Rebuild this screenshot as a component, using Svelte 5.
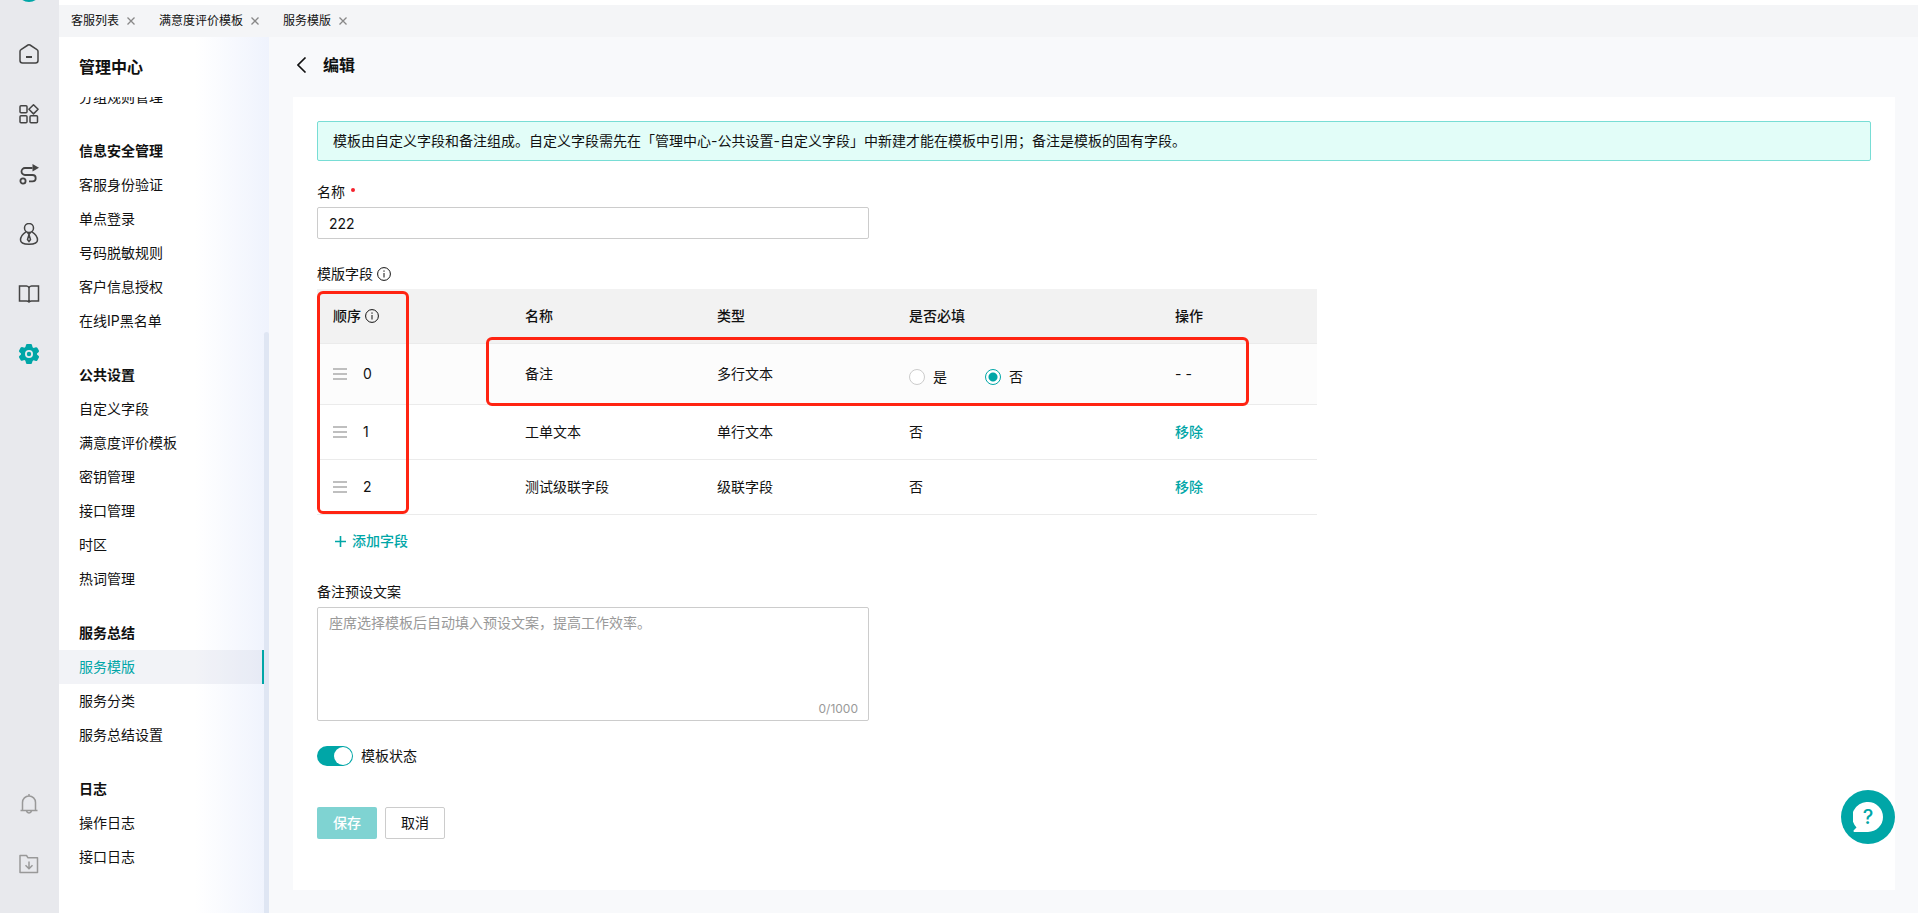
<script>
  let name = '222';
  let preset = '';
  let remarkRequired = 'no';
  let enabled = true;

  const tabs = ['客服列表', '满意度评价模板', '服务模版'];

  const active = '服务模版';

  const groups = [
    { title: '', items: ['分组规则管理'] },
    {
      title: '信息安全管理',
      items: ['客服身份验证', '单点登录', '号码脱敏规则', '客户信息授权', '在线IP黑名单'],
    },
    {
      title: '公共设置',
      items: ['自定义字段', '满意度评价模板', '密钥管理', '接口管理', '时区', '热词管理'],
    },
    { title: '服务总结', items: ['服务模版', '服务分类', '服务总结设置'] },
    { title: '日志', items: ['操作日志', '接口日志'] },
  ];

  let fields = [
    { name: '备注', type: '多行文本', fixed: true },
    { name: '工单文本', type: '单行文本', required: '否' },
    { name: '测试级联字段', type: '级联字段', required: '否' },
  ];

  const removeField = (index) => {
    fields = fields.filter((_, i) => i !== index);
  };
</script>

{#snippet info()}
  <svg width="14" height="14" viewBox="0 0 14 14">
    <circle cx="7" cy="7" r="6.4" />
    <path d="M7 6v4.5M7 3.4v1.4" />
  </svg>
{/snippet}

<div class="app">
  <nav class="rail" aria-label="主导航">
    <span class="logo"></span>
    <button aria-label="首页">
      <svg width="22" height="22" viewBox="0 0 22 22">
        <path d="M2 8.4Q2 7.2 3 6.6L10 2Q11 1.4 12 2L19 6.6Q20 7.2 20 8.4V17.5Q20 20 17.5 20H4.5Q2 20 2 17.5Z" />
        <path stroke-width="2" d="M8 14h6" />
      </svg>
    </button>
    <button aria-label="应用">
      <svg width="22" height="22" viewBox="0 0 22 22">
        <rect x="2" y="2.8" width="7" height="7" rx="1" />
        <rect x="2" y="12.8" width="7" height="7" rx="1" />
        <rect x="12" y="12.8" width="7.5" height="7" rx="1" />
        <path d="M15.5 1.7l4.6 4.6-4.6 4.6-4.6-4.6z" stroke-linejoin="round" />
      </svg>
    </button>
    <button aria-label="流程">
      <svg width="22" height="22" viewBox="0 0 22 22">
        <g stroke-width="1.8">
          <circle cx="5" cy="18" r="2.6" />
          <path d="M14.5 5H7a3.5 3.5 0 0 0 0 7h7.500a3.200 3.200 0 0 1 0 6.400H11" />
        </g>
        <path class="solid" d="M14.5 1l6.500 3.800-6.500 3.800z" />
      </svg>
    </button>
    <button aria-label="客户">
      <svg width="22" height="22" viewBox="0 0 22 22">
        <circle cx="11" cy="5" r="4.5" />
        <path d="M8 8.8C4.5 11 2.5 13.5 2.5 17c0 2.600 3 4.200 8.500 4.200s8.500-1.600 8.500-4.200c0-3.500-2-6-5.500-8.200" />
        <path d="M9.6 9.5l1.400 2 1.400-2M11 11.500l-1.500 5 1.500 2 1.500-2z" />
      </svg>
    </button>
    <button aria-label="知识库">
      <svg width="22" height="22" viewBox="0 0 22 22">
        <path d="M11 5Q10.500 3 8.500 3H1.500V18H8.500Q10 18 11 19Q12 18 13.500 18H20.500V3H13.500Q11.500 3 11 5V19" />
      </svg>
    </button>
    <button class="current" aria-label="设置">
      <svg width="22" height="22" viewBox="0 0 22 22">
        <path
          class="solid"
          fill-rule="evenodd"
          d="M8 2Q8.200 1 9 1h4q.8 0 1 1l.6 2.300 1 .6 2.300-.7q.9-.200 1.400.6l1.600 2.800q.4.900-.2 1.500L19 10.500v1l1.700 1.600q.6.600.2 1.500l-1.600 2.800q-.5.800-1.400.6l-2.300-.7-1 .6L14 20q-.2 1-1 1H9q-.8 0-1-1l-.6-2.300-1-.6-2.300.7q-.9.200-1.400-.6L1.100 14.600q-.4-.9.200-1.500L3 11.500v-1L1.300 8.900q-.6-.6-.2-1.500l1.600-2.800q.5-.8 1.400-.6l2.300.7 1-.6zM11 7a4 4 0 1 0 0 8a4 4 0 0 0 0-8z"
        />
        <circle class="solid" cx="11" cy="11" r="2.2" />
      </svg>
    </button>
    <span class="spacer"></span>
    <button class="muted" aria-label="通知">
      <svg width="22" height="22" viewBox="0 0 22 22">
        <path d="M2.500 17.500h17M4.500 17.500V9.500a6.500 6.500 0 0 1 13 0v8M11 1v2M8.500 18a2.600 2.600 0 0 0 5 0" />
      </svg>
    </button>
    <button class="muted" aria-label="下载">
      <svg width="22" height="22" viewBox="0 0 22 22">
        <path d="M2 2.500h6.500l1.500 2.300h9.500V19.500H2z" stroke-linejoin="round" />
        <path d="M11 8.500v7M7.500 12.300l3.500 3.500 3.500-3.500" />
      </svg>
    </button>
  </nav>

  <div class="main">
    <div class="tabs">
      {#each tabs as tab}
        <div class="tab">
          <a href="#tab">{tab}</a>
          <button aria-label="关闭{tab}">
            <svg width="8" height="8" viewBox="0 0 8 8"><path d="M.5.5l7 7M7.5.5l-7 7" /></svg>
          </button>
        </div>
      {/each}
    </div>

    <div class="body">
      <aside class="sidebar">
        <h2>管理中心</h2>
        <div class="menu">
          <div class="menu-list">
            {#each groups as group}
              <section>
                {#if group.title}<h3>{group.title}</h3>{/if}
                {#each group.items as item}
                  <a href="#menu" class:active={item === active}>{item}</a>
                {/each}
              </section>
            {/each}
          </div>
          <span class="scrollbar"></span>
        </div>
      </aside>

      <main>
        <header>
          <button aria-label="返回">
            <svg width="10" height="16" viewBox="0 0 10 16"><path d="M8.500.5L1 8l7.500 7.500" /></svg>
          </button>
          <h1>编辑</h1>
        </header>

        <form class="card" on:submit|preventDefault>
          <p class="notice">
            模板由自定义字段和备注组成。自定义字段需先在「管理中心-公共设置-自定义字段」中新建才能在模板中引用；备注是模板的固有字段。
          </p>

          <label class="label" for="name">名称 <span class="dot"></span></label>
          <input id="name" class="text" type="text" bind:value={name} />

          <div class="label section">模版字段 {@render info()}</div>
          <div class="table-wrap">
            <table>
              <thead>
                <tr>
                  <th><span class="cell">顺序 {@render info()}</span></th>
                  <th>名称</th>
                  <th>类型</th>
                  <th>是否必填</th>
                  <th>操作</th>
                </tr>
              </thead>
              <tbody>
                {#each fields as field, i}
                  <tr class:fixed={field.fixed}>
                    <td>
                      <span class="cell order">
                        <svg width="14" height="12" viewBox="0 0 14 12">
                          <path d="M0 1h14M0 6h14M0 11h14" />
                        </svg>
                        {i}
                      </span>
                    </td>
                    <td>{field.name}</td>
                    <td>{field.type}</td>
                    <td>
                      {#if field.fixed}
                        <div class="radios">
                          <label><input type="radio" value="yes" bind:group={remarkRequired} />是</label>
                          <label><input type="radio" value="no" bind:group={remarkRequired} />否</label>
                        </div>
                      {:else}
                        {field.required}
                      {/if}
                    </td>
                    <td>
                      {#if field.fixed}
                        - -
                      {:else}
                        <button type="button" class="link" on:click={() => removeField(i)}>移除</button>
                      {/if}
                    </td>
                  </tr>
                {/each}
              </tbody>
            </table>
            <span class="mark mark-order"></span>
            <span class="mark mark-remark"></span>
          </div>

          <button type="button" class="link add">
            <svg width="11" height="11" viewBox="0 0 11 11"><path d="M5.500 0v11M0 5.500h11" /></svg>
            添加字段
          </button>

          <label class="label" for="preset">备注预设文案</label>
          <div class="textarea">
            <textarea
              id="preset"
              maxlength="1000"
              placeholder="座席选择模板后自动填入预设文案，提高工作效率。"
              bind:value={preset}
            ></textarea>
            <span class="count">{preset.length}/1000</span>
          </div>

          <label class="switch">
            <input type="checkbox" role="switch" bind:checked={enabled} />
            模板状态
          </label>

          <div class="actions">
            <button class="save" type="submit">保存</button>
            <button class="cancel" type="button">取消</button>
          </div>
        </form>
      </main>
    </div>
  </div>

  <button class="help" aria-label="帮助">
    <svg width="30" height="30" viewBox="0 0 30 30">
      <path d="M15 0a15 15 0 1 1 0 30H1q-1-1 0-2l2.500-2.500A15 15 0 0 1 15 0z" />
    </svg>
    <span>?</span>
  </button>
</div>

<style>
  :global(body) {
    margin: 0;
    color: #111;
    font: 14px/22px Inter, 'Noto Sans CJK SC', sans-serif;
  }

  .app,
  .app * {
    box-sizing: border-box;
  }

  .app {
    display: flex;
    height: 100vh;
    overflow: hidden;
    background: #f8f9fb;
  }

  h1,
  h2,
  h3,
  p {
    margin: 0;
  }

  a {
    color: inherit;
    text-decoration: none;
  }

  button {
    padding: 0;
    border: none;
    background: none;
    color: inherit;
    font: inherit;
    cursor: pointer;
  }

  svg {
    display: block;
    flex: none;
    fill: none;
    stroke: currentColor;
  }

  .rail {
    position: relative;
    display: flex;
    flex-direction: column;
    align-items: center;
    flex: none;
    width: 59px;
    padding: 24px 1px 19px 0;
    background: #e8e9ed;
    color: #444;
  }

  /* the logo sticks out of the top edge */
  .logo {
    position: absolute;
    top: -22px;
    width: 24px;
    height: 24px;
    border-radius: 50%;
    background: #00a6a7;
  }

  .rail button {
    display: grid;
    place-items: center;
    flex: none;
    width: 58px;
    height: 60px;
  }

  .rail svg {
    stroke-width: 1.5;
  }

  .rail .current {
    color: #00a6a7;
  }

  .rail .muted {
    color: #999;
  }

  .solid {
    fill: currentColor;
    stroke: none;
  }

  .spacer {
    flex: 1;
  }

  .main {
    display: flex;
    flex-direction: column;
    flex: 1;
    min-width: 0;
  }

  .tabs {
    display: flex;
    flex: none;
    gap: 24px;
    height: 37px;
    padding: 0 12px;
    border-top: 5px solid #fff;
    background: #f4f5f7;
    font-size: 12px;
  }

  .tab {
    display: flex;
    align-items: center;
    gap: 8px;
  }

  .tab button {
    color: #888;
  }

  .tab svg {
    stroke-width: 1.3;
  }

  .body {
    display: flex;
    flex: 1;
    min-height: 0;
  }

  .sidebar {
    display: flex;
    flex-direction: column;
    flex: none;
    width: 210px;
    background: linear-gradient(90deg, #fff 65%, #eff3fd);
  }

  .sidebar h2 {
    padding: 19px 20px;
    font-size: 16px;
    line-height: 22px;
  }

  .menu {
    position: relative;
    flex: 1;
    min-height: 0;
    overflow: hidden;
  }

  /* list is scrolled half a row down */
  .menu-list {
    margin: -17px 5px 0 0;
  }

  .menu section {
    margin-bottom: 20px;
  }

  .menu h3,
  .menu a {
    display: block;
    padding: 0 20px;
    font-size: 14px;
    line-height: 34px;
  }

  .menu a.active {
    border-right: 2px solid #00a6a7;
    background: rgba(200, 206, 222, 0.24);
    color: #00a6a7;
  }

  .scrollbar {
    position: absolute;
    top: 235px;
    right: 0;
    bottom: 0;
    width: 5px;
    border-radius: 3px 3px 0 0;
    background: #dfe6f3;
  }

  main {
    display: flex;
    flex-direction: column;
    flex: 1;
    min-width: 0;
    padding: 0 23px 23px 24px;
  }

  header {
    display: flex;
    align-items: center;
    flex: none;
    gap: 16px;
    height: 60px;
    padding: 0 4px 4px;
  }

  header svg {
    stroke-width: 1.6;
  }

  h1 {
    font-size: 16px;
    line-height: 24px;
  }

  .card {
    flex: 1;
    padding: 24px;
    background: #fff;
  }

  .notice {
    margin-bottom: 20px;
    padding: 8px 15px;
    border: 1px solid #78ddd5;
    border-radius: 2px;
    background: #e2fdf8;
  }

  .label {
    display: flex;
    align-items: center;
    gap: 4px;
    margin-bottom: 4px;
  }

  .section {
    margin-top: 24px;
  }

  .dot {
    width: 4px;
    height: 4px;
    margin: 0 0 4px 2px;
    border-radius: 50%;
    background: #f5222d;
  }

  .text,
  .textarea {
    display: block;
    width: 552px;
    max-width: 100%;
    border: 1px solid #ccc;
    border-radius: 2px;
    background: #fff;
  }

  .text {
    height: 32px;
    padding: 0 11px;
    color: inherit;
    font: inherit;
  }

  .table-wrap {
    position: relative;
    width: 1000px;
  }

  table {
    width: 100%;
    border-collapse: separate;
    border-spacing: 0;
    table-layout: fixed;
  }

  th,
  td {
    width: 192px;
    height: 55px;
    padding: 0 16px;
    border-bottom: 1px solid #ebebeb;
    text-align: left;
  }

  th {
    background: #f2f2f2;
    font-weight: 500;
  }

  th:nth-child(4) {
    width: 266px;
  }

  th:last-child {
    width: 158px;
  }

  .fixed td {
    height: 61px;
    background: #fcfcfc;
  }

  .cell {
    display: flex;
    align-items: center;
    gap: 4px;
  }

  .order {
    gap: 16px;
  }

  .order svg {
    color: #aaa;
    stroke-width: 1.4;
  }

  .radios {
    display: flex;
    gap: 38px;
    padding-top: 6px;
  }

  .radios label {
    display: flex;
    align-items: center;
    gap: 8px;
  }

  .radios input {
    width: 16px;
    height: 16px;
    margin: 0;
    border: 1px solid #ccc;
    border-radius: 50%;
    background: #fff;
    appearance: none;
  }

  .radios input:checked {
    border-color: #00a6a7;
    background: radial-gradient(circle, #00a6a7 4px, #fff 5px);
  }

  .link {
    color: #00a6a7;
    font-weight: 500;
  }

  .mark {
    position: absolute;
    border: 3px solid #ff2412;
    border-radius: 6px;
    pointer-events: none;
  }

  .mark-order {
    top: 2px;
    left: 0;
    width: 92px;
    height: 223px;
  }

  .mark-remark {
    top: 48px;
    left: 169px;
    width: 763px;
    height: 69px;
  }

  .add {
    display: flex;
    align-items: center;
    gap: 6px;
    height: 32px;
    margin: 10px 0 24px;
    padding: 0 18px;
  }

  .add svg {
    stroke-width: 1.6;
  }

  .textarea {
    position: relative;
    height: 114px;
  }

  textarea {
    display: block;
    width: 100%;
    height: 88px;
    padding: 4px 11px;
    border: none;
    outline: none;
    background: none;
    color: inherit;
    font: inherit;
    resize: none;
  }

  textarea::placeholder {
    color: #999;
    opacity: 1;
  }

  .count {
    position: absolute;
    right: 10px;
    bottom: 0;
    color: #999;
    font-size: 12px;
  }

  .switch {
    display: flex;
    align-items: center;
    gap: 8px;
    width: max-content;
    margin: 24px 0 40px;
  }

  .switch input {
    display: flex;
    width: 36px;
    height: 20px;
    margin: 0;
    padding: 1px;
    border-radius: 10px;
    background: #bbb;
    appearance: none;
  }

  .switch input::before {
    width: 18px;
    height: 18px;
    border-radius: 50%;
    background: #fff;
    content: '';
  }

  .switch input:checked {
    justify-content: flex-end;
    background: #00a6a7;
  }

  .actions {
    display: flex;
    gap: 8px;
  }

  .actions button {
    width: 60px;
    height: 32px;
    border-radius: 2px;
  }

  .save {
    background: #7fd3d2;
    color: #fff;
    font-weight: 500;
  }

  .cancel {
    border: 1px solid #ccc;
    background: #fff;
  }

  .help {
    position: fixed;
    right: 23px;
    bottom: 69px;
    display: grid;
    place-items: center;
    width: 54px;
    height: 54px;
    border-radius: 50%;
    background: #00a6a7;
    color: #00a6a7;
  }

  .help svg,
  .help span {
    grid-area: 1 / 1;
  }

  .help svg {
    fill: #fff;
    stroke: none;
  }

  .help span {
    font-size: 20px;
    font-weight: 500;
  }
</style>
